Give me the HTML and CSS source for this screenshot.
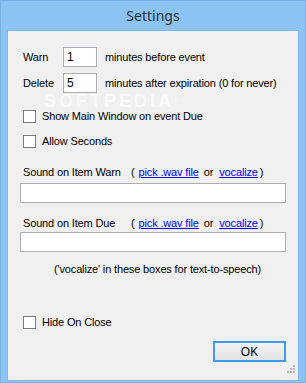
FILE: index.html
```html
<!DOCTYPE html>
<html>
<head>
<meta charset="utf-8">
<link rel="stylesheet" href="styles.css">
</head>
<body>
<div class="window">
  <div class="titlebar">Settings</div>
  <div class="client">
    <div class="row field-row first">
      <span class="lbl">Warn</span>
      <input class="num" type="text" value="1">
      <span class="after">minutes before event</span>
    </div>
    <div class="row field-row second">
      <span class="lbl">Delete</span>
      <input class="num" type="text" value="5">
      <span class="after">minutes after expiration (0 for never)</span>
    </div>
    <label class="row check cb1"><span class="box"></span><span>Show Main Window on event Due</span></label>
    <label class="row check cb2"><span class="box"></span><span>Allow Seconds</span></label>

    <div class="row sound-lbl warn-lbl">
      <span class="slbl">Sound on Item Warn</span>
      <span class="paren">(</span><a class="lnk l1" href="#">pick .wav file</a><span class="or">or</span><a class="lnk l2" href="#">vocalize</a><span class="paren close">)</span>
    </div>
    <input class="wide w1" type="text">

    <div class="row sound-lbl due-lbl">
      <span class="slbl">Sound on Item Due</span>
      <span class="paren">(</span><a class="lnk l1" href="#">pick .wav file</a><span class="or">or</span><a class="lnk l2" href="#">vocalize</a><span class="paren close">)</span>
    </div>
    <input class="wide w2" type="text">

    <div class="note">('vocalize' in these boxes for text-to-speech)</div>

    <label class="row check cb3"><span class="box"></span><span>Hide On Close</span></label>

    <div class="footer"><button class="ok">OK</button></div>

    <div class="watermark">SOFTPEDIA<sup>®</sup></div>
    <svg class="grip" width="9" height="9" viewBox="0 0 9 9">
      <rect x="6" y="0" width="2" height="2" fill="#b9b9b9"/>
      <rect x="3" y="3" width="2" height="2" fill="#b9b9b9"/>
      <rect x="6" y="3" width="2" height="2" fill="#b9b9b9"/>
      <rect x="0" y="6" width="2" height="2" fill="#b9b9b9"/>
      <rect x="3" y="6" width="2" height="2" fill="#b9b9b9"/>
      <rect x="6" y="6" width="2" height="2" fill="#b9b9b9"/>
    </svg>
  </div>
</div>
</body>
</html>
```
FILE: styles.css
```css
* { box-sizing: border-box; }
html, body { margin: 0; padding: 0; background: #8bc4f3; }
body { width: 306px; height: 383px; overflow: hidden; }

.window {
  width: 306px;
  height: 383px;
  background: #8bc4f3;
  border: 1px solid #78b2e6;
  padding: 0 6px 1px 6px;
  display: flex;
  flex-direction: column;
  font-family: "Liberation Sans", Arial, sans-serif;
  font-size: 11px;
  letter-spacing: -0.15px;
  color: #000;
}

.titlebar {
  height: 29px;
  flex: none;
  text-align: center;
  font-family: "Noto Sans", "Open Sans", sans-serif;
  font-size: 14px;
  letter-spacing: 0;
  line-height: 30px;
  color: #2e2e2e;
}

.client {
  flex: 1;
  position: relative;
  background: #f0f0f0;
  border: 1px solid #80b8ea;
  padding: 0 12px;
  display: flex;
  flex-direction: column;
  align-items: flex-start;
}

.row { display: flex; align-items: center; }

.field-row { height: 20px; padding-left: 3px; }
.field-row.first { margin-top: 16px; }
.field-row.second { margin-top: 6px; }
.lbl { width: 40px; line-height: 13px; }
.num {
  width: 34px;
  height: 20px;
  border: 1px solid #abadb3;
  background: #fff;
  font: 12px "Liberation Sans", Arial, sans-serif;
  padding: 0 0 0 3px;
  margin: 0;
  color: #000;
}
.after { margin-left: 8px; line-height: 13px; }

.check { height: 13px; padding-left: 3px; line-height: 13px; }
.check .box {
  width: 13px;
  height: 13px;
  border: 1px solid #7a7a7a;
  background: #fff;
  margin-right: 6px;
  flex: none;
}
.cb1 { margin-top: 17px; }
.cb2 { margin-top: 12px; }
.cb3 { margin-top: 40px; }

.sound-lbl { line-height: 13px; padding-left: 3px; }
.warn-lbl { margin-top: 18px; }
.due-lbl { margin-top: 14px; }
.slbl { width: 108px; }
.paren { margin-right: 4px; }
.paren.close { margin-left: 2px; margin-right: 0; }
.lnk { color: #0000ff; text-decoration: underline; }
.or { margin: 0 6px 0 5px; }

.wide {
  width: 266px;
  height: 20px;
  border: 1px solid #abadb3;
  background: #fff;
  margin: 0;
  padding: 0;
}
.w1 { margin-top: 4px; }
.w2 { margin-top: 2px; }

.note { margin-top: 11px; margin-left: 34px; line-height: 13px; }

.footer {
  align-self: stretch;
  display: flex;
  justify-content: flex-end;
  margin-top: 12px;
}
.ok {
  width: 73px;
  height: 21px;
  margin: 0;
  border: 2px solid #3d9bf1;
  background: linear-gradient(#f2f2f2, #e3e3e3);
  font: 12px "Liberation Sans", Arial, sans-serif;
  color: #000;
  padding: 0;
}

.watermark {
  position: absolute;
  left: 36px;
  top: 62px;
  font: bold 18px "Liberation Sans", Arial, sans-serif;
  letter-spacing: 3px;
  line-height: 16px;
  height: 16px;
  color: rgba(255, 255, 255, 0.65);
  pointer-events: none;
}
.watermark sup { font-size: 7px; font-weight: normal; vertical-align: top; letter-spacing: 0; }

.grip { position: absolute; right: 2px; bottom: 6px; }
```
